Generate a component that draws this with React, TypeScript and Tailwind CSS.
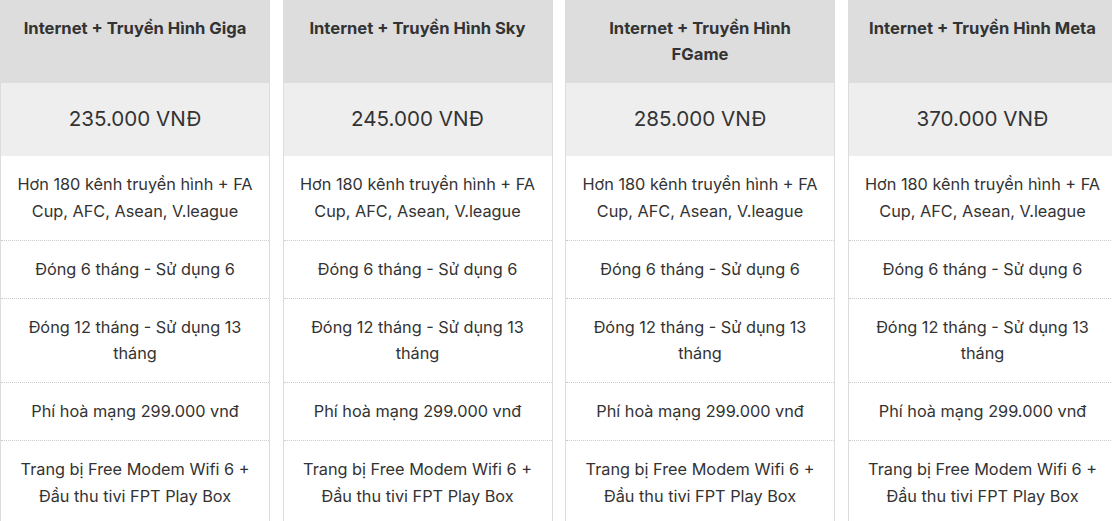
const plans = [
  { name: "Internet + Truyền Hình Giga", price: "235.000 VNĐ" },
  { name: "Internet + Truyền Hình Sky", price: "245.000 VNĐ" },
  { name: "Internet + Truyền Hình FGame", price: "285.000 VNĐ" },
  { name: "Internet + Truyền Hình Meta", price: "370.000 VNĐ" },
];

const features = [
  "Hơn 180 kênh truyền hình + FA Cup, AFC, Asean, V.league",
  "Đóng 6 tháng - Sử dụng 6",
  "Đóng 12 tháng - Sử dụng 13 tháng",
  "Phí hoà mạng 299.000 vnđ",
  "Trang bị Free Modem Wifi 6 + Đầu thu tivi FPT Play Box",
];

function PlanCard({ name, price }: { name: string; price: string }) {
  return (
    <div className="flex flex-col border-x border-[#dcdcdc] bg-white">
      <div className="h-[83px] bg-[#dddddd] px-[15px] pt-[15px] text-center text-[16.6px] font-bold leading-[26px] text-[#333333]">
        {name}
      </div>
      <div className="flex h-[73px] items-center justify-center bg-[#eeeeee] px-[15px] text-[20.6px] text-[#333333]">
        {price}
      </div>
      {features.map((f, i) => (
        <div
          key={i}
          className="border-b border-dotted border-[#cccccc] px-[15px] py-[15.25px] text-center text-[16.3px] leading-[26.5px] text-[#333333]"
        >
          {f}
        </div>
      ))}
    </div>
  );
}

export default function App() {
  return (
    <div
      className="h-[521px] w-[1112px] overflow-hidden bg-white"
      style={{ fontFamily: "Inter, 'Noto Sans', sans-serif" }}
    >
      <div className="grid w-[1117px] grid-cols-[repeat(4,270px)] gap-x-[12.5px]">
        {plans.map((p) => (
          <PlanCard key={p.name} name={p.name} price={p.price} />
        ))}
      </div>
    </div>
  );
}
